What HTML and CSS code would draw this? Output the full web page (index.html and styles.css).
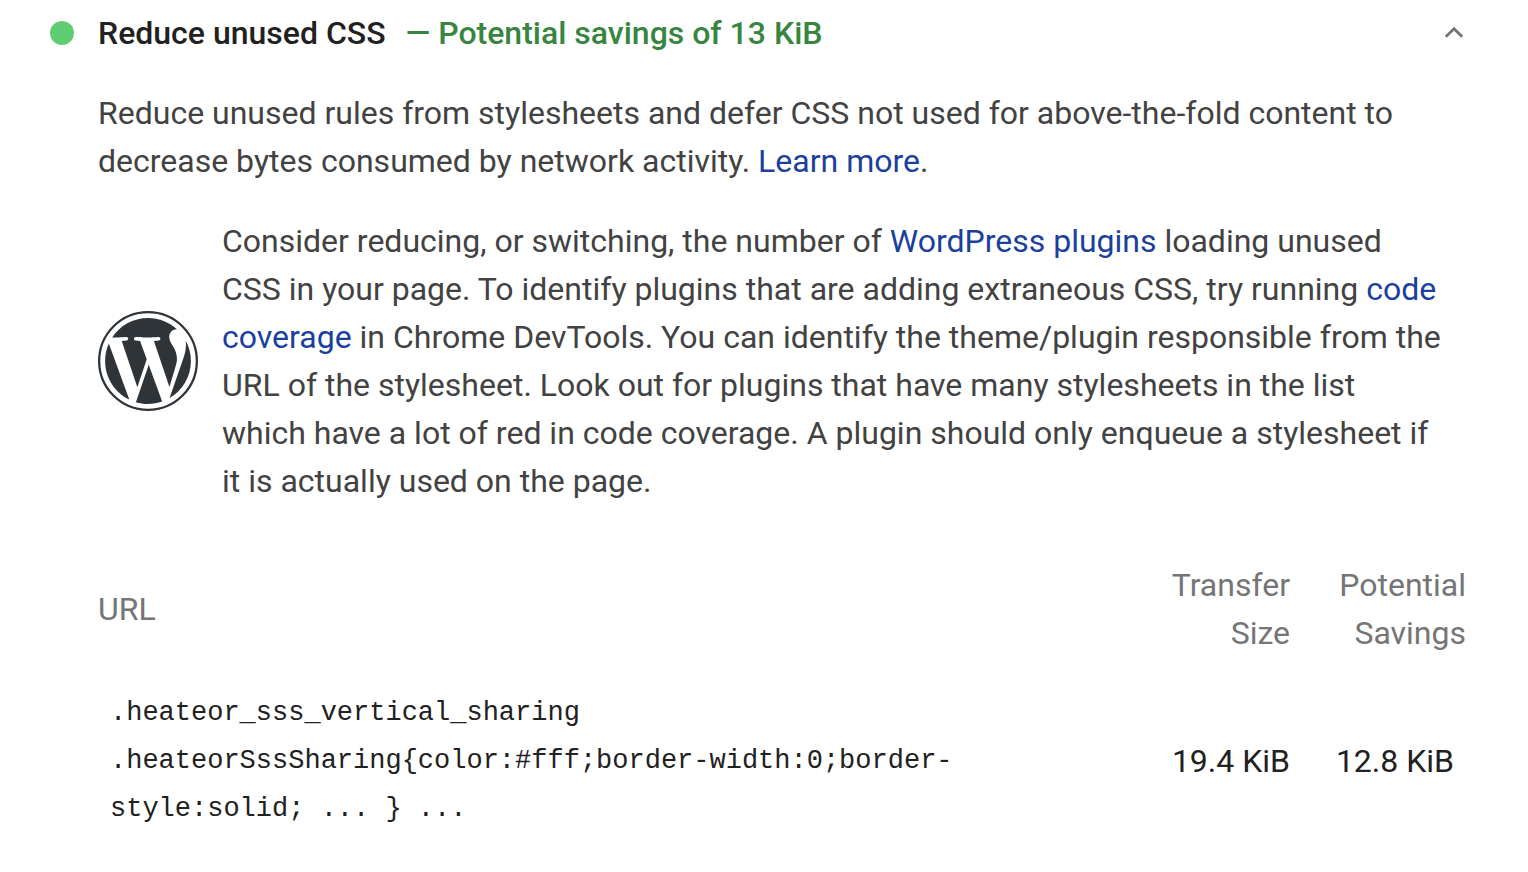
FILE: index.html
```html
<!DOCTYPE html>
<html lang="en">
<head>
<meta charset="utf-8">
<title>Reduce unused CSS</title>
<link rel="stylesheet" href="styles.css">
</head>
<body>
<details class="audit" open>
  <summary class="audit-header">
    <span class="score-dot"></span>
    <span class="audit-title">Reduce unused CSS</span>
    <span class="audit-savings">— Potential savings of 13 KiB</span>
    <svg class="chevron" viewBox="0 0 24 24" aria-hidden="true"><path d="M3.800 15.700 12 7.700l8.200 8" fill="none" stroke="#757575" stroke-width="2.800"/></svg>
  </summary>
  <div class="audit-body">
    <p class="description">Reduce unused rules from stylesheets and defer CSS not used for above-the-fold content to decrease bytes consumed by network activity. <a href="#learn">Learn more</a>.</p>
    <div class="stack-pack">
      <svg class="wp-logo" viewBox="0 0 122.5 122.5" role="img" aria-label="WordPress">
        <g fill="#2f3439">
          <path d="m8.708 61.26c0 20.802 12.089 38.779 29.619 47.298l-25.069-68.686c-2.916 6.536-4.55 13.769-4.55 21.388z"/>
          <path d="m96.74 58.608c0-6.495-2.333-10.993-4.334-14.494-2.664-4.329-5.161-7.995-5.161-12.324 0-4.831 3.664-9.328 8.825-9.328.233 0 .454.029.681.042-9.35-8.566-21.807-13.796-35.489-13.796-18.36 0-34.513 9.42-43.91 23.688 1.233.037 2.395.063 3.382.063 5.497 0 14.006-.667 14.006-.667 2.833-.167 3.167 3.994.337 4.329 0 0-2.847.335-6.015.501l19.138 56.925 11.501-34.493-8.188-22.434c-2.83-.166-5.511-.501-5.511-.501-2.832-.166-2.5-4.496.332-4.329 0 0 8.679.667 13.843.667 5.496 0 14.006-.667 14.006-.667 2.835-.167 3.168 3.994.337 4.329 0 0-2.853.335-6.015.501l18.992 56.494 5.242-17.517c2.272-7.269 4.001-12.49 4.001-16.989z"/>
          <path d="m62.184 65.857-15.768 45.819c4.708 1.384 9.687 2.141 14.846 2.141 6.12 0 11.989-1.058 17.452-2.979-.141-.225-.269-.464-.374-.724z"/>
          <path d="m107.376 36.046c.226 1.674.354 3.471.354 5.404 0 5.333-.996 11.328-3.996 18.824l-16.053 46.413c15.624-9.111 26.133-26.038 26.133-45.426.001-9.137-2.333-17.729-6.438-25.215z"/>
        </g>
        <circle cx="61.250" cy="61.250" r="59.850" fill="none" stroke="#2f3439" stroke-width="2.800"/>
      </svg>
      <p class="advice">Consider reducing, or switching, the number of <a href="#plugins">WordPress plugins</a> loading unused CSS in your page. To identify plugins that are adding extraneous CSS, try running <a href="#coverage">code coverage</a> in Chrome DevTools. You can identify the theme/plugin responsible from the URL of the stylesheet. Look out for plugins that have many stylesheets in the list which have a lot of red in code coverage. A plugin should only enqueue a stylesheet if it is actually used on the page.</p>
    </div>
    <table class="details-table">
      <thead>
        <tr><th class="url" scope="col">URL</th><th class="size" scope="col">Transfer Size</th><th class="savings" scope="col">Potential Savings</th></tr>
      </thead>
      <tbody>
        <tr>
          <td class="code"><code>.heateor_sss_vertical_sharing<br>.heateorSssSharing{color:#fff;border-width:0;border-style:solid; ... } ...</code></td>
          <td class="number">19.4 KiB</td>
          <td class="number">12.8 KiB</td>
        </tr>
      </tbody>
    </table>
  </div>
</details>
</body>
</html>
```
FILE: styles.css
```css
* {
  box-sizing: border-box;
}

body {
  margin: 0;
  background: #fff;
  color: #212121;
  font-family: Roboto, "Liberation Sans", sans-serif;
  font-size: 32px;
  line-height: 48px;
}

a {
  color: #1a3f9c;
  text-decoration: none;
}

p {
  margin: 0;
}

.audit {
  padding: 9px 62px 38px 50px;
}

.audit-header {
  display: flex;
  align-items: center;
  list-style: none;
  font-weight: 500;
  cursor: pointer;
}

.score-dot {
  width: 24px;
  height: 24px;
  margin-right: 24px;
  border-radius: 50%;
  background: #5fcd73;
}

.audit-title {
  margin-right: 20px;
}

.audit-savings {
  color: #37853f;
}

.chevron {
  width: 24px;
  height: 24px;
  margin-left: auto;
}

.audit-body {
  padding: 32px 0 0 48px;
  color: #424242;
}

.stack-pack {
  display: flex;
  align-items: center;
  gap: 24px;
  margin-top: 32px;
  padding-right: 24px;
}

.wp-logo {
  flex: none;
  width: 100px;
  height: 100px;
}

.details-table {
  width: 100%;
  margin-top: 56px;
  border-collapse: collapse;
}

.details-table th {
  padding: 0 0 24px;
  color: #757575;
  font-weight: 400;
  text-align: right;
}

.details-table .url {
  text-align: left;
}

.details-table .size {
  width: 200px;
  padding-left: 80px;
}

.details-table .savings {
  width: 176px;
  padding-left: 40px;
}

.details-table td {
  padding: 8px 0;
  color: #212121;
}

.details-table .code {
  padding-left: 12px;
  padding-right: 120px;
}

.details-table code {
  display: block;
  font-family: "Liberation Mono", monospace;
  font-size: 27px;
}

.details-table .number {
  text-align: right;
  white-space: nowrap;
}

.details-table .number:last-child {
  padding-right: 12px;
}
```
